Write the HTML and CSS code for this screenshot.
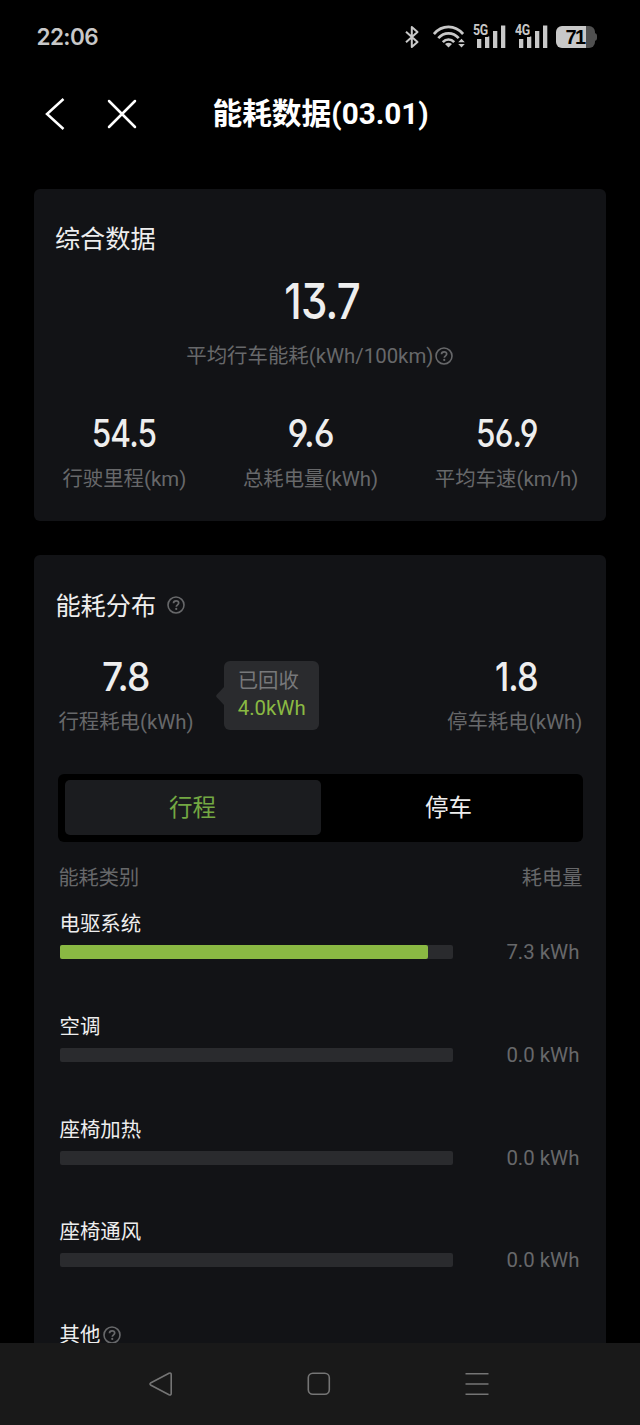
FILE: index.html
```html
<!DOCTYPE html>
<html lang="zh-CN">
<head>
<meta charset="utf-8">
<title>能耗数据</title>
<link rel="stylesheet" href="styles.css">
</head>
<body>
<svg class="defs" width="0" height="0" aria-hidden="true">
  <symbol id="help" viewBox="0 0 18 18">
    <circle cx="9" cy="9" r="8" fill="none" stroke="currentColor" stroke-width="1.6"/>
    <path d="M6.500 7.300C6.500 5.800 7.600 4.900 9.100 4.900s2.600.9 2.600 2.200c0 1.700-2.400 1.800-2.400 3.700" fill="none" stroke="currentColor" stroke-width="1.7"/>
    <circle cx="9.250" cy="12.900" r="1.100"/>
  </symbol>
</svg>
<div class="screen">
  <div class="status">
    <span class="clock">22:06</span>
    <div class="status-icons">
      <svg class="bt" width="14" height="24" viewBox="0 0 14 24" fill="none" stroke="#c8c8c8" stroke-width="2" stroke-linejoin="round"><path d="M1 6.800 12.500 17 6.800 22V2L12.500 7 1 17.200"/></svg>
      <svg class="wifi" width="32" height="24" viewBox="0 0 32 24" fill="none" stroke="#c8c8c8" stroke-width="2.700"><path d="M.9 9C9-.5 22-.5 30.100 9M5.300 13.200c5.700-6.500 14.700-6.500 20.400 0M9.800 17.200c3.300-3.600 8.100-3.600 11.400 0"/><path d="M15.500 22.500 12 19q3.500-2.700 7 0z" fill="#c8c8c8" stroke="none"/><path d="m25.200 17.300 3.300-3.600 3.300 3.600zM25.200 18.900h6.600l-3.300 3.600z" fill="#c8c8c8" stroke="none"/></svg>
      <div class="signal"><svg width="33" height="24" viewBox="0 0 33 24" fill="#c8c8c8"><path d="M4 14h4.300v9H4zM12 11.500h4.300V23H12zM20 6h4.300v17H20zM28 .5h4.300V23H28z"/></svg><span>5G</span></div>
      <div class="signal"><svg width="33" height="24" viewBox="0 0 33 24" fill="#c8c8c8"><path d="M4 14h4.300v9H4zM12 11.500h4.300V23H12zM20 6h4.300v17H20zM28 .5h4.300V23H28z"/></svg><span>4G</span></div>
      <div class="battery"><span>71</span></div>
    </div>
  </div>
  <header class="header">
    <svg class="back" width="22" height="34" viewBox="0 0 22 34" fill="none" stroke="#fff" stroke-width="2.500"><path d="M20.500 2 4 17l16.500 15"/></svg>
    <svg class="close" width="30" height="30" viewBox="0 0 30 30" fill="none" stroke="#fff" stroke-width="2.500" stroke-linecap="round"><path d="m2 2 26 26M28 2 2 28"/></svg>
    <h1>能耗数据(03.01)</h1>
  </header>

  <section class="card overview">
    <h2>综合数据</h2>
    <div class="num main-num">13.7</div>
    <div class="label main-label">平均行车能耗(kWh/100km)<svg class="help"><use href="#help"/></svg></div>
    <div class="cols">
      <div class="col"><div class="num wide">54.5</div><div class="label">行驶里程(km)</div></div>
      <div class="col"><div class="num">9.6</div><div class="label">总耗电量(kWh)</div></div>
      <div class="col"><div class="num wide">56.9</div><div class="label">平均车速(km/h)</div></div>
    </div>
  </section>

  <section class="card breakdown">
    <h2>能耗分布<svg class="help"><use href="#help"/></svg></h2>
    <div class="split">
      <div class="col"><div class="num">7.8</div><div class="label">行程耗电(kWh)</div></div>
      <div class="recovered">
        <svg width="8" height="18" viewBox="0 0 8 18"><path d="M8 0v18L.7 10.300q-1-1.300 0-2.600z" fill="#2a2b2e"/></svg>
        <div class="bubble"><span>已回收</span><b>4.0kWh</b></div>
      </div>
      <div class="col parked"><div class="num one">1.8</div><div class="label">停车耗电(kWh)</div></div>
    </div>
    <div class="tabs"><div class="tab active">行程</div><div class="tab">停车</div></div>
    <div class="list-head"><span>能耗类别</span><span>耗电量</span></div>
    <div class="item"><div class="name">电驱系统</div><div class="row"><div class="track"><div class="fill" style="width:93.6%"></div></div><span>7.3 kWh</span></div></div>
    <div class="item"><div class="name">空调</div><div class="row"><div class="track"></div><span>0.0 kWh</span></div></div>
    <div class="item"><div class="name">座椅加热</div><div class="row"><div class="track"></div><span>0.0 kWh</span></div></div>
    <div class="item"><div class="name">座椅通风</div><div class="row"><div class="track"></div><span>0.0 kWh</span></div></div>
    <div class="item last"><div class="name">其他<svg class="help"><use href="#help"/></svg></div></div>
  </section>

  <nav class="nav">
    <svg width="26" height="26" viewBox="0 0 26 26"><path d="M3 11.700 21 2.300q2.200-.8 2.200 1.300v18.800q0 2.100-2.200 1.300L3 14.300q-2-1.300 0-2.600z"/></svg>
    <svg width="26" height="26" viewBox="0 0 26 26"><rect x="2.300" y="2.300" width="21" height="21" rx="4.500"/></svg>
    <svg width="26" height="26" viewBox="0 0 26 26"><path d="M1.500 2.700h23M1.500 13h23M1.500 23.300h23"/></svg>
  </nav>
</div>
</body>
</html>
```

FILE: styles.css
```css
* { box-sizing: border-box; }
body { margin: 0; background: #000; }
h1, h2 { margin: 0; font-weight: 400; }
svg { display: block; flex: none; }
.defs { position: absolute; }
.screen {
  width: 640px; height: 1425px; overflow: hidden;
  display: flex; flex-direction: column;
  background: #000; color: #eee;
  font-family: Roboto, "Noto Sans CJK SC", sans-serif;
  white-space: nowrap;
}
.status {
  height: 73px; flex: none; padding: 0 45px 0 36.500px;
  display: flex; align-items: center; justify-content: space-between;
  color: #c8c8c8;
}
.clock { font: 600 22.500px/30px Inter, sans-serif; letter-spacing: -.6px; }
.status-icons { display: flex; align-items: center; }
.bt { margin-right: 14px; }
.wifi { margin-right: 8px; }
.signal { position: relative; margin-right: 8.500px; }
.signal span {
  position: absolute; left: 0; top: -1px;
  font: 700 14px/13px Roboto, sans-serif;
  background: #000; letter-spacing: -.3px;
  transform: scaleX(.88); transform-origin: 0 0;
}
.battery {
  position: relative; width: 39px; height: 22px; border-radius: 6px;
  background: linear-gradient(90deg, #c8c8c8 30px, #505050 30px);
  color: #000;
}
.battery::after {
  content: ""; position: absolute; right: -2px; top: 7px;
  width: 3px; height: 8px; border-radius: 0 3px 3px 0; background: #505050;
}
.battery span { display: block; padding-left: 9.500px; font: 700 20px/22px "Liberation Sans", sans-serif; letter-spacing: -1.500px; }
.header {
  height: 82px; flex: none; padding-left: 42.500px;
  display: flex; align-items: center; color: #fff;
}
.close { margin: 0 76px 0 42px; }
.header h1 { font-size: 29.700px; font-weight: 700; line-height: 40px; }
.card {
  width: 572px; margin-left: 34.400px; flex: none;
  background: #121316; border-radius: 6px;
}
.card h2 { display: flex; align-items: center; font-size: 25.200px; line-height: 40px; height: 41px; padding-top: 3px; }
.help { width: 18px; height: 18px; color: #67686a; fill: #67686a; }
.card h2 .help { margin: 0 0 4px 10.500px; }
.num {
  font-family: Inter, sans-serif; font-weight: 450;
  font-feature-settings: "cv03", "cv04", "cv09";
  color: #eee; text-align: center; letter-spacing: -1px;
  transform: scaleX(.94);
}
.label { font-size: 20.400px; line-height: 28px; color: #67686a; }
.overview { height: 332px; margin-top: 34px; padding: 29px 28px 0; }
.overview h2 { margin-left: -7.500px; }
.main-num { font-size: 50px; line-height: 60px; margin-top: 12px; padding-left: 5px; transform: scaleX(.84); }
.main-label { display: flex; justify-content: center; align-items: center; gap: 2px; margin: 11px 1px 0 0; }
.cols { display: flex; justify-content: space-between; margin-top: 41px; }
.cols .num { font-size: 37.500px; line-height: 46px; }
.cols .wide { transform: scaleX(.84); }
.cols .label { margin-top: 8px; }
.breakdown { height: 788px; margin-top: 34px; padding: 30px 24px 0; overflow: hidden; border-radius: 6px 6px 0 0; }
.breakdown h2 { margin-left: -3px; }
.split { display: flex; height: 119.500px; margin-top: 28px; }
.split .num { font-size: 39.500px; line-height: 46px; }
.split .one { padding-left: 4px; transform: scaleX(.87); }
.split .label { margin-top: 8px; }
.recovered { display: flex; align-items: center; height: 69px; margin: 7px 0 0 22px; }
.bubble {
  width: 95.500px; height: 69px; border-radius: 6px; background: #2a2b2e;
  display: flex; flex-direction: column; padding: 7px 14px;
  font-size: 20.400px; line-height: 27px; color: #77787a;
}
.bubble b { font-weight: 400; color: #8aba43; line-height: 26px; }
.parked { margin-left: auto; }
.tabs {
  display: flex; width: 525px; height: 68px; padding: 6.500px; margin: 0 0 0 -.3px;
  background: #000; border-radius: 6px; font-size: 23.500px;
}
.tab { flex: 1; height: 55px; line-height: 57px; border-radius: 5px; text-align: center; color: #eee; }
.tab.active { background: #1b1c1f; color: #73a843; }
.list-head {
  display: flex; justify-content: space-between; height: 28px; margin-top: 22.500px;
  font-size: 20.200px; line-height: 28px; color: #67686a;
}
.item { height: 102.800px; padding-top: 18px; margin-left: 1.200px; }
.item.last { height: 46px; padding-top: 17.500px; }
.name { display: flex; align-items: center; gap: 3px; height: 28px; line-height: 28px; font-size: 20.400px; }
.row { display: flex; align-items: center; justify-content: space-between; height: 28px; padding-right: 3px; font-size: 20.400px; color: #67686a; }
.track { width: 393.500px; height: 14px; background: #2a2b2e; border-radius: 2px; }
.fill { height: 14px; background: #8ab943; border-radius: 2px; }
.nav {
  flex: none; height: 82px; padding: 0 150px 0 148px; background: #191919;
  display: flex; align-items: center; justify-content: space-between;
}
.nav svg { fill: none; stroke: #757575; stroke-width: 1.600; }
```
